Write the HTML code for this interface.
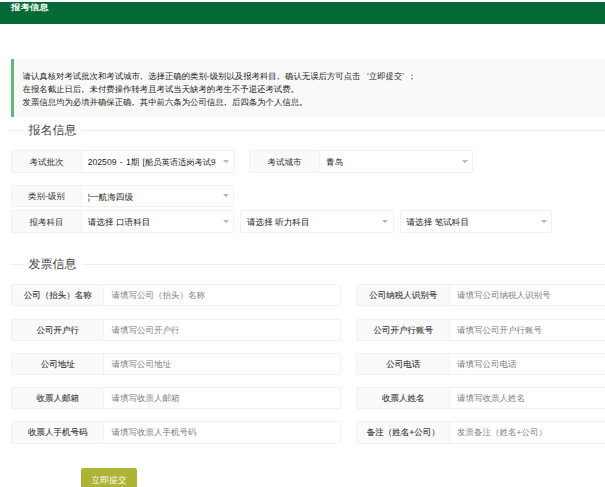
<!DOCTYPE html>
<html><head><meta charset="utf-8">
<style>
*{box-sizing:border-box;margin:0;padding:0}
html,body{width:605px;height:487px;overflow:hidden;background:#fff;font-family:"Liberation Sans",sans-serif;color:#333;text-rendering:geometricPrecision}
.abs{position:absolute}
q1{display:inline-block;width:1em;text-align:right}i{font-style:normal;display:inline-block;width:1em;text-indent:-0.32em}q2{display:inline-block;width:1em;text-align:left}
#hdr{left:0;top:2px;width:605px;height:21.6px;background:#036936}
#hdr span{position:absolute;left:11px;top:-1.3px;font-size:9.4px;font-weight:bold;color:#fff;line-height:12px;white-space:nowrap;transform:scaleY(0.87);transform-origin:0 100%}
#tip{left:11px;top:59px;width:594px;height:58px;background:#f9f9f9;border-left:3px solid #5fb878}
#tip p{position:absolute;left:8.6px;font-size:8.4px;line-height:10px;white-space:nowrap;color:#222}
.fs{left:11px;width:594px;height:1px;background:#eee}
.lg{background:#fff;font-size:12px;line-height:14px;color:#444;padding:0 6px;white-space:nowrap}
.lb{background:#fafafa;border:1px solid #f1f1f1;border-radius:2px 0 0 2px;font-size:8.5px;text-align:center;white-space:nowrap;color:#333}
.sel{background:#fff;border:1px solid #f1f1f1;border-left:none;border-radius:0 2px 2px 0;font-size:8.6px;white-space:nowrap;overflow:hidden;color:#222}
.full{border-left:1px solid #f1f1f1;border-radius:2px}
.ip{background:#fff;border:1px solid #f1f1f1;border-left:none;border-radius:0 2px 2px 0;font-size:8.5px;white-space:nowrap;overflow:hidden;color:#7a7a7a}
.b{font-weight:normal;color:#333;-webkit-text-stroke:0.1px #333}
#btn{left:81.2px;top:467.5px;width:55.6px;height:24px;background:#abb434;border-radius:2px;color:#fff;font-size:8.8px;text-align:center;line-height:25px}
</style></head><body>
<div id="hdr" class="abs"><span>报考信息</span></div>
<div id="tip" class="abs">
<p style="top:11.6px">请认真核对考试批次和考试城市<i>，</i>选择正确的类别-级别以及报考科目<i>，</i>确认无误后方可点击<q1>‘</q1>立即提交<q2>’</q2><span style="margin-left:-0.35em">；</span></p>
<p style="top:24.6px">在报名截止日后<i>，</i>未付费操作转考且考试当天缺考的考生不予退还考试费。</p>
<p style="top:37.6px">发票信息均为必填并确保正确<i>，</i>其中前六条为公司信息<i>，</i>后四条为个人信息。</p>
</div>
<div class="abs fs" style="top:130.3px"></div>
<div class="abs lg" style="left:22.6px;top:123px">报名信息</div>

<div class="abs lb" style="left:11.3px;top:150.3px;width:70.3px;height:22.4px;line-height:20.4px;padding-top:0.8px">考试批次</div>
<div class="abs sel" style="left:81.6px;top:150.3px;width:153.2px;height:22.4px;line-height:20.4px;padding-left:6.2px;padding-top:0.8px"><span style="display:inline-block;width:128.3px;overflow:hidden;vertical-align:top"><span style="word-spacing:0.9px">202509 - 1期 [</span><span style="font-size:8.25px">船员英语适岗考试9]</span></span></div>
<svg class="abs" style="left:223px;top:159.7px" width="6" height="3.4" viewBox="0 0 6 3.4"><polygon points="0,0 6,0 3.0,3.4" fill="#bbb"/></svg>
<div class="abs lb" style="left:249.2px;top:150.3px;width:70.5px;height:22.4px;line-height:20.4px;padding-top:0.8px">考试城市</div>
<div class="abs sel" style="left:319.7px;top:150.3px;width:153.8px;height:22.4px;line-height:20.4px;padding-left:6.4px;padding-top:0.8px">青岛</div>
<svg class="abs" style="left:461.5px;top:159.7px" width="6" height="3.4" viewBox="0 0 6 3.4"><polygon points="0,0 6,0 3.0,3.4" fill="#bbb"/></svg>
<div class="abs lb" style="left:11.3px;top:184.8px;width:70.3px;height:22.6px;line-height:20.6px;padding-top:0px">类别-级别</div>
<div class="abs sel" style="left:81.6px;top:184.8px;width:152.8px;height:22.6px;line-height:20.6px;padding-left:6.2px;padding-top:0.8px">¦一航海四级</div>
<svg class="abs" style="left:223px;top:194.3px" width="6" height="3.4" viewBox="0 0 6 3.4"><polygon points="0,0 6,0 3.0,3.4" fill="#bbb"/></svg>
<div class="abs lb" style="left:11.3px;top:210.3px;width:70.3px;height:22.3px;line-height:20.3px;padding-top:0.4px">报考科目</div>
<div class="abs sel" style="left:81.6px;top:210.3px;width:152.8px;height:22.3px;line-height:20.3px;padding-left:6.2px;padding-top:0.8px">请选择 口语科目</div>
<svg class="abs" style="left:223px;top:219.7px" width="6" height="3.4" viewBox="0 0 6 3.4"><polygon points="0,0 6,0 3.0,3.4" fill="#bbb"/></svg>
<div class="abs sel full" style="left:240px;top:210.3px;width:153.6px;height:22.3px;line-height:20.3px;padding-left:6.0px;padding-top:0.8px">请选择 听力科目</div>
<svg class="abs" style="left:382px;top:219.7px" width="6" height="3.4" viewBox="0 0 6 3.4"><polygon points="0,0 6,0 3.0,3.4" fill="#bbb"/></svg>
<div class="abs sel full" style="left:399.5px;top:210.3px;width:152.9px;height:22.3px;line-height:20.3px;padding-left:6.0px;padding-top:0.8px">请选择 笔试科目</div>
<svg class="abs" style="left:541px;top:219.7px" width="6" height="3.4" viewBox="0 0 6 3.4"><polygon points="0,0 6,0 3.0,3.4" fill="#bbb"/></svg>
<div class="abs fs" style="top:263.5px"></div>
<div class="abs lg" style="left:22.6px;top:257px">发票信息</div>
<div class="abs lb b" style="left:11.3px;top:284.0px;width:92.9px;height:22.4px;line-height:20.4px;padding-top:0px">公司（抬头）名称</div>
<div class="abs ip" style="left:104.2px;top:284.0px;width:237.0px;height:22.4px;line-height:20.4px;padding-left:7.3px;padding-top:0.3px">请填写公司（抬头）名称</div>
<div class="abs lb b" style="left:356.3px;top:284.0px;width:93.9px;height:22.4px;line-height:20.4px;padding-top:0px">公司纳税人识别号</div>
<div class="abs ip" style="left:450.2px;top:284.0px;width:170px;height:22.4px;line-height:20.4px;padding-left:6.8px;padding-top:0.3px">请填写公司纳税人识别号</div>
<div class="abs lb b" style="left:11.3px;top:318.7px;width:92.9px;height:22.0px;line-height:20.0px;padding-top:0px">公司开户行</div>
<div class="abs ip" style="left:104.2px;top:318.7px;width:237.0px;height:22.0px;line-height:20.0px;padding-left:7.3px;padding-top:0.3px">请填写公司开户行</div>
<div class="abs lb b" style="left:356.3px;top:318.7px;width:93.9px;height:22.0px;line-height:20.0px;padding-top:0px">公司开户行账号</div>
<div class="abs ip" style="left:450.2px;top:318.7px;width:170px;height:22.0px;line-height:20.0px;padding-left:6.8px;padding-top:0.3px">请填写公司开户行账号</div>
<div class="abs lb b" style="left:11.3px;top:352.8px;width:92.9px;height:22.4px;line-height:20.4px;padding-top:0px">公司地址</div>
<div class="abs ip" style="left:104.2px;top:352.8px;width:237.0px;height:22.4px;line-height:20.4px;padding-left:7.3px;padding-top:0.3px">请填写公司地址</div>
<div class="abs lb b" style="left:356.3px;top:352.8px;width:93.9px;height:22.4px;line-height:20.4px;padding-top:0px">公司电话</div>
<div class="abs ip" style="left:450.2px;top:352.8px;width:170px;height:22.4px;line-height:20.4px;padding-left:6.8px;padding-top:0.3px">请填写公司电话</div>
<div class="abs lb b" style="left:11.3px;top:387.0px;width:92.9px;height:22.3px;line-height:20.3px;padding-top:0px">收票人邮箱</div>
<div class="abs ip" style="left:104.2px;top:387.0px;width:237.0px;height:22.3px;line-height:20.3px;padding-left:7.3px;padding-top:0.3px">请填写收票人邮箱</div>
<div class="abs lb b" style="left:356.3px;top:387.0px;width:93.9px;height:22.3px;line-height:20.3px;padding-top:0px">收票人姓名</div>
<div class="abs ip" style="left:450.2px;top:387.0px;width:170px;height:22.3px;line-height:20.3px;padding-left:6.8px;padding-top:0.3px">请填写收票人姓名</div>
<div class="abs lb b" style="left:11.3px;top:421.2px;width:92.9px;height:22.4px;line-height:20.4px;padding-top:0px">收票人手机号码</div>
<div class="abs ip" style="left:104.2px;top:421.2px;width:237.0px;height:22.4px;line-height:20.4px;padding-left:7.3px;padding-top:0.3px">请填写收票人手机号码</div>
<div class="abs lb b" style="left:356.3px;top:421.2px;width:93.9px;height:22.4px;line-height:20.4px;padding-top:0px">备注（姓名+公司）</div>
<div class="abs ip" style="left:450.2px;top:421.2px;width:170px;height:22.4px;line-height:20.4px;padding-left:6.8px;padding-top:0.3px">发票备注（姓名+公司）</div>
<div id="btn" class="abs">立即提交</div>
</body></html>
